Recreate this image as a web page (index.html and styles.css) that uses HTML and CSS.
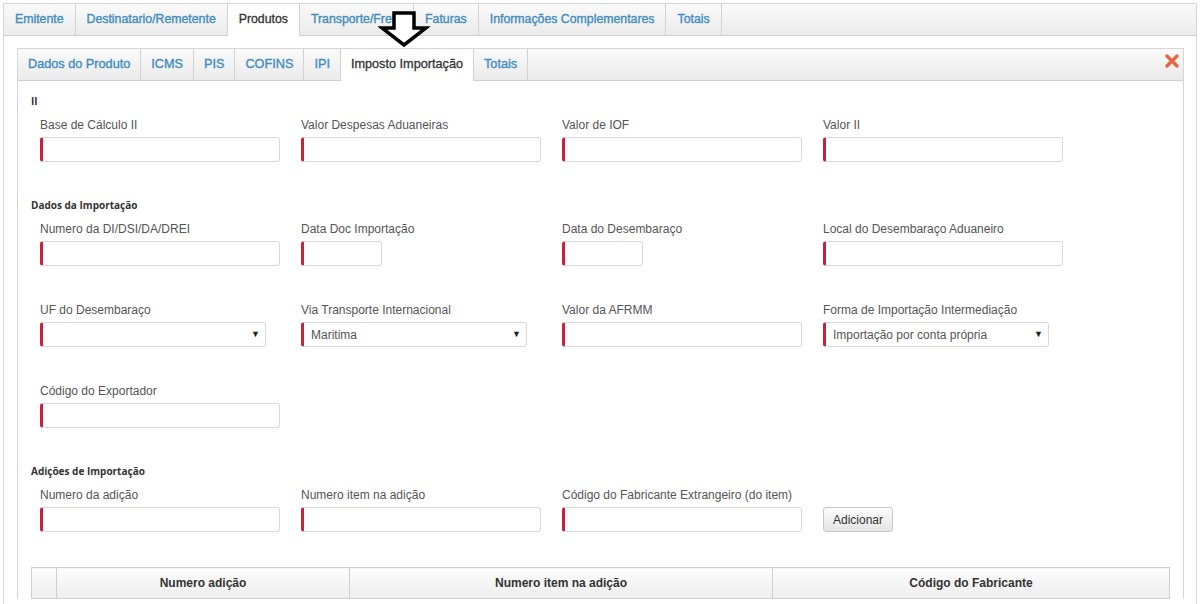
FILE: index.html
```html
<!DOCTYPE html>
<html lang="pt-BR">
  <head>
    <meta charset="UTF-8" />
    <meta name="viewport" content="width=device-width, initial-scale=1.0" />
    <title>NF-e - Produtos</title>
    <link rel="stylesheet" href="styles.css">
  </head>
  <body>
    <div class="page">
      <div class="tabs outer-tabs">
        <a class="tab">Emitente</a>
        <a class="tab">Destinatario/Remetente</a>
        <a class="tab active">Produtos</a>
        <a class="tab">Transporte/Frete</a>
        <a class="tab">Faturas</a>
        <a class="tab">Informações Complementares</a>
        <a class="tab">Totais</a>
      </div>

      <div class="panel">
        <div class="tabs inner-tabs">
          <a class="tab">Dados do Produto</a>
          <a class="tab">ICMS</a>
          <a class="tab">PIS</a>
          <a class="tab">COFINS</a>
          <a class="tab">IPI</a>
          <a class="tab active">Imposto Importação</a>
          <a class="tab">Totais</a>
          <span class="close">
            <svg width="14" height="14" viewBox="0 0 14 14">
              <path d="M2 2 L12 12 M12 2 L2 12" stroke="#e9653f" stroke-width="3.2" stroke-linecap="round" />
            </svg>
          </span>
        </div>

        <div class="panel-body">
          <h4 class="section-title">II</h4>
          <div class="row">
            <div class="field">
              <label>Base de Cálculo II</label>
              <input type="text" class="input" />
            </div>
            <div class="field">
              <label>Valor Despesas Aduaneiras</label>
              <input type="text" class="input" />
            </div>
            <div class="field">
              <label>Valor de IOF</label>
              <input type="text" class="input" />
            </div>
            <div class="field">
              <label>Valor II</label>
              <input type="text" class="input" />
            </div>
          </div>

          <h4 class="section-title">Dados da Importação</h4>
          <div class="row">
            <div class="field">
              <label>Numero da DI/DSI/DA/DREI</label>
              <input type="text" class="input" />
            </div>
            <div class="field">
              <label>Data Doc Importação</label>
              <input type="text" class="input date" />
            </div>
            <div class="field">
              <label>Data do Desembaraço</label>
              <input type="text" class="input date" />
            </div>
            <div class="field">
              <label>Local do Desembaraço Aduaneiro</label>
              <input type="text" class="input" />
            </div>
          </div>

          <div class="row">
            <div class="field">
              <label>UF do Desembaraço</label>
              <div class="select-wrap">
                <select class="input select">
                  <option></option>
                </select>
              </div>
            </div>
            <div class="field">
              <label>Via Transporte Internacional</label>
              <div class="select-wrap">
                <select class="input select">
                  <option>Maritima</option>
                </select>
              </div>
            </div>
            <div class="field">
              <label>Valor da AFRMM</label>
              <input type="text" class="input" />
            </div>
            <div class="field">
              <label>Forma de Importação Intermediação</label>
              <div class="select-wrap">
                <select class="input select">
                  <option>Importação por conta própria</option>
                </select>
              </div>
            </div>
          </div>

          <div class="row">
            <div class="field">
              <label>Código do Exportador</label>
              <input type="text" class="input" />
            </div>
          </div>

          <h4 class="section-title">Adições de Importação</h4>
          <div class="row last">
            <div class="field">
              <label>Numero da adição</label>
              <input type="text" class="input" />
            </div>
            <div class="field">
              <label>Numero item na adição</label>
              <input type="text" class="input" />
            </div>
            <div class="field">
              <label>Código do Fabricante Extrangeiro (do item)</label>
              <input type="text" class="input" />
            </div>
            <div class="field field-action">
              <button class="btn">Adicionar</button>
            </div>
          </div>

          <table class="grid">
            <thead>
              <tr>
                <th class="col-check"></th>
                <th class="col-num">Numero adição</th>
                <th class="col-item">Numero item na adição</th>
                <th class="col-code">Código do Fabricante</th>
              </tr>
            </thead>
          </table>
        </div>
      </div>
    </div>

    <svg class="pointer" width="52" height="42" viewBox="0 0 52 42">
      <path d="M16 4 L36 4 L36 19 L48 19 L26 36 L4 19 L16 19 Z" fill="#fff" stroke="#000" stroke-width="3.5" stroke-linejoin="miter" />
    </svg>
  </body>
</html>
```

FILE: styles.css
```css
body {
  font-family: "Liberation Sans", Arial, sans-serif;
  font-size: 12px;
  margin: 0;
  background-color: #fff;
  color: #555;
}

.page {
  margin: 3px 3px 0;
  border: 1px solid #d6d6d6;
  border-bottom: none;
  padding-bottom: 40px;
}

.tabs {
  display: flex;
  align-items: stretch;
  height: 31px;
  background: linear-gradient(#fafafa, #ebebeb);
  border-bottom: 1px solid #cfcfcf;
}

.tab {
  display: block;
  padding: 0 11px;
  line-height: 31px;
  font-size: 12.3px;
  color: #3f8cc1;
  -webkit-text-stroke: 0.35px #3f8cc1;
  border-right: 1px solid #d2d2d2;
  cursor: pointer;
  white-space: nowrap;
}

.inner-tabs .tab {
  padding: 0 10px;
  font-size: 12.7px;
}

.tab.active {
  background-color: #fff;
  color: #333;
  -webkit-text-stroke: 0.3px #333;
  height: 32px;
}

.panel {
  margin: 12px 12px 0 13px;
  border: 1px solid #d6d6d6;
  border-bottom: none;
}

.close {
  margin-left: auto;
  padding: 5px 4px 0 0;
}

.panel-body {
  padding: 14px 14px 0 13px;
}

.section-title {
  margin: 0 0 11px;
  font-family: "Open Sans", "Liberation Sans", sans-serif;
  font-size: 10px;
  font-weight: bold;
  line-height: 12px;
  color: #333;
}

.row {
  display: grid;
  grid-template-columns: repeat(4, 261px);
  margin-bottom: 37px;
}

.row.last {
  margin-bottom: 35px;
}

.field {
  padding-left: 9px;
}

.field label {
  display: block;
  line-height: 14px;
  margin-bottom: 5px;
  color: #555;
}

.input {
  display: block;
  width: 240px;
  height: 25px;
  box-sizing: border-box;
  border: 1px solid #d9d9d9;
  border-left: 3px solid #c8213b;
  border-radius: 3px;
  background-color: #fff;
  font-family: "Liberation Sans", Arial, sans-serif;
  font-size: 12px;
  color: #555;
  padding: 0 8px;
}

.input.date {
  width: 81px;
}

.select-wrap {
  position: relative;
  width: 226px;
}

.select {
  width: 226px;
  -webkit-appearance: none;
  appearance: none;
  padding-left: 7px;
}

.select-wrap::after {
  content: "\25BC";
  position: absolute;
  right: 6px;
  top: 7px;
  font-size: 9px;
  color: #222;
}

.field-action {
  display: flex;
  align-items: flex-end;
}

.btn {
  height: 25px;
  padding: 0 9px;
  border: 1px solid #c9c9c9;
  border-radius: 3px;
  background: linear-gradient(#fdfdfd, #e4e4e4);
  font-family: "Liberation Sans", Arial, sans-serif;
  font-size: 12px;
  color: #333;
}

.grid {
  width: 1139px;
  border-collapse: collapse;
  table-layout: fixed;
}

.grid th {
  height: 30px;
  padding: 0;
  border: 1px solid #cfcfcf;
  background: linear-gradient(#fdfdfd, #eeeeee);
  font-size: 12px;
  font-weight: bold;
  color: #333;
  text-align: center;
}

.col-check {
  width: 24px;
}

.col-num {
  width: 292px;
}

.col-item {
  width: 422px;
}

.pointer {
  position: absolute;
  left: 378px;
  top: 9px;
}
```
